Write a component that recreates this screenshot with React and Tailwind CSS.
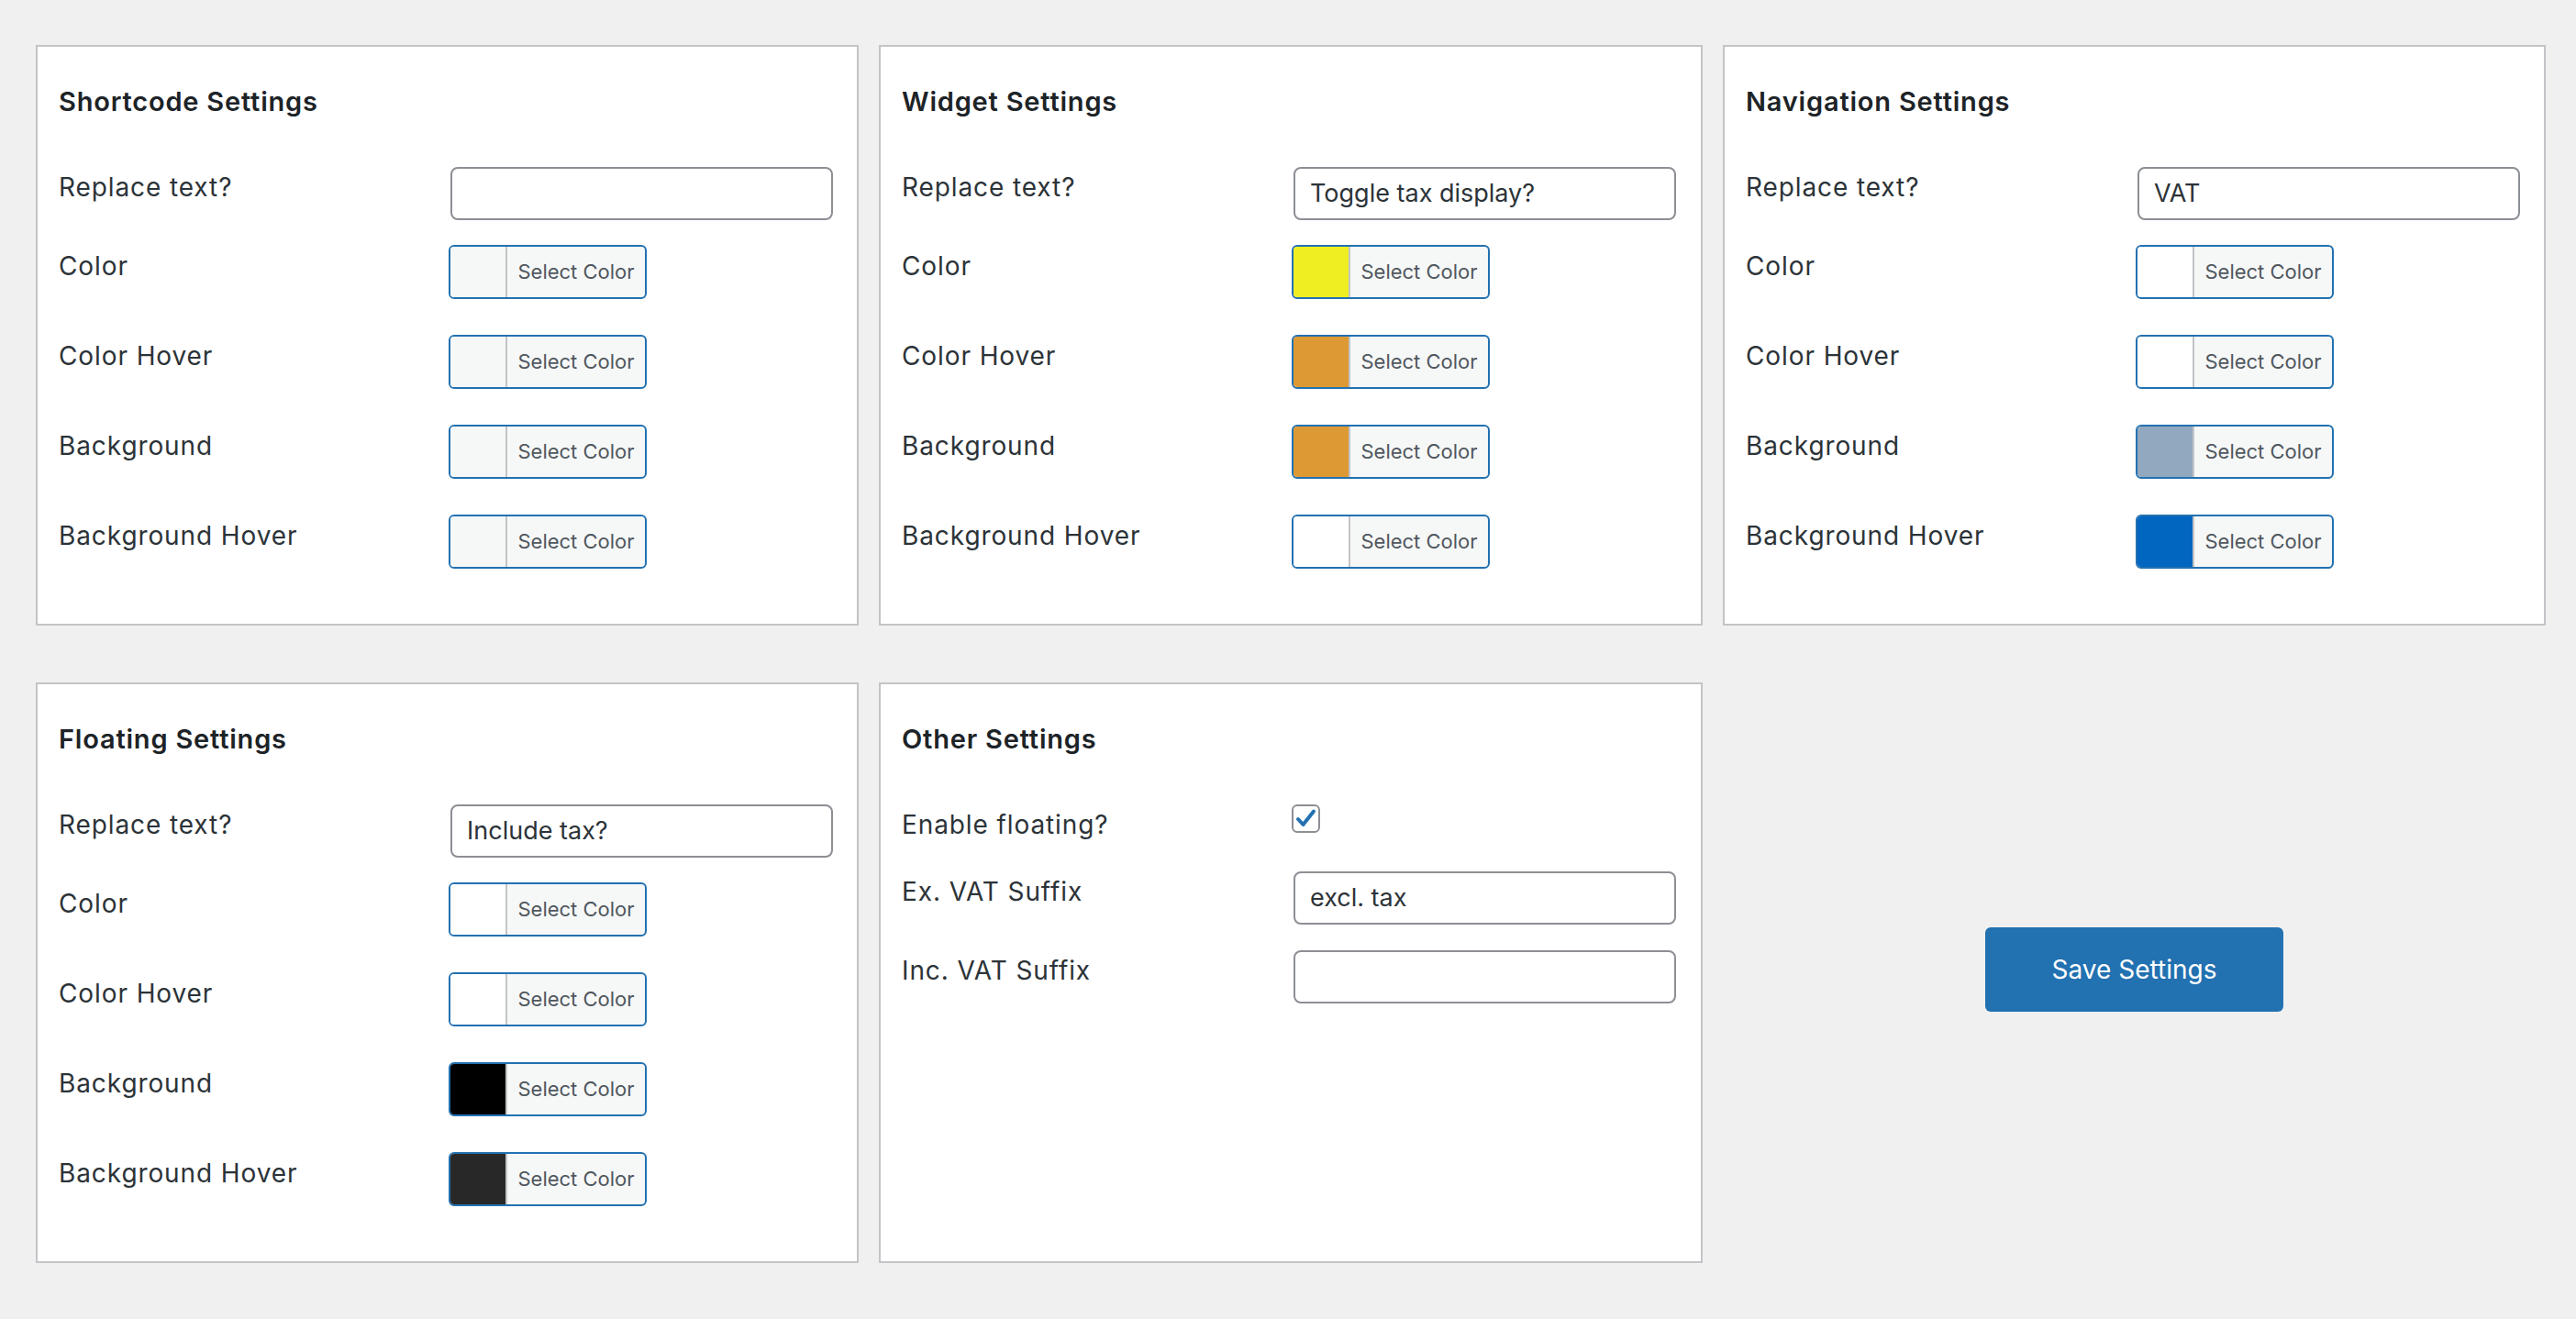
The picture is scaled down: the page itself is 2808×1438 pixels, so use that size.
import React from "react";

const colorPanels = [
  {
    title: "Shortcode Settings",
    text: "",
    colors: [
      { label: "Color", swatch: "bg-[#f6f7f7]" },
      { label: "Color Hover", swatch: "bg-[#f6f7f7]" },
      { label: "Background", swatch: "bg-[#f6f7f7]" },
      { label: "Background Hover", swatch: "bg-[#f6f7f7]" },
    ],
  },
  {
    title: "Widget Settings",
    text: "Toggle tax display?",
    colors: [
      { label: "Color", swatch: "bg-[#eeee22]" },
      { label: "Color Hover", swatch: "bg-[#dd9933]" },
      { label: "Background", swatch: "bg-[#dd9933]" },
      { label: "Background Hover", swatch: "bg-white" },
    ],
  },
  {
    title: "Navigation Settings",
    text: "VAT",
    colors: [
      { label: "Color", swatch: "bg-white" },
      { label: "Color Hover", swatch: "bg-white" },
      { label: "Background", swatch: "bg-[#91a8bf]" },
      { label: "Background Hover", swatch: "bg-[#0066bf]" },
    ],
  },
  {
    title: "Floating Settings",
    text: "Include tax?",
    colors: [
      { label: "Color", swatch: "bg-white" },
      { label: "Color Hover", swatch: "bg-white" },
      { label: "Background", swatch: "bg-black" },
      { label: "Background Hover", swatch: "bg-[#282828]" },
    ],
  },
];

function Panel({ title, children }) {
  return (
    <div className="h-[633px] border-2 border-[#c3c4c7] bg-white pl-[23px] pr-[26px] pt-[40px]">
      <h2 className="text-[29px] leading-[40px] font-semibold tracking-[0.8px] text-[#1d2327]">{title}</h2>
      <div className="mt-[51px] flex flex-col">{children}</div>
    </div>
  );
}

function TextRow({ label, value }) {
  return (
    <div className="flex h-[58px]">
      <div className="w-[427px] pt-[2px] text-[28px] leading-[40px] tracking-[0.9px] text-[#2c3338]">{label}</div>
      <div className="flex h-[58px] w-[417px] items-center rounded-[8px] border-2 border-[#8c8f94] bg-white px-[16px] text-[27px] text-[#2c3338]">
        {value}
      </div>
    </div>
  );
}

function ColorRow({ label, swatch }) {
  return (
    <div className="flex h-[59px]">
      <div className="w-[425px] pt-[3px] text-[28px] leading-[40px] tracking-[0.9px] text-[#2c3338]">{label}</div>
      <div className="flex h-[59px] w-[216px] overflow-hidden rounded-[6px] border-2 border-[#2271b1] bg-[#f6f7f7]">
        <div className={"h-full w-[60px] " + swatch} />
        <div className="h-full w-[2px] bg-[#c3c4c7]" />
        <div className="flex flex-1 items-center justify-center text-[22px] text-[#50575e]">Select Color</div>
      </div>
    </div>
  );
}

function ColorPanel({ p }) {
  return (
    <Panel title={p.title}>
      <TextRow label="Replace text?" value={p.text} />
      <div className="mt-[27px] flex flex-col gap-[39px]">
        {p.colors.map((c) => (
          <ColorRow key={c.label} label={c.label} swatch={c.swatch} />
        ))}
      </div>
    </Panel>
  );
}

function OtherPanel() {
  return (
    <Panel title="Other Settings">
      <div className="flex h-[73px]">
        <div className="w-[425px] pt-[2px] text-[28px] leading-[40px] tracking-[0.9px] text-[#2c3338]">Enable floating?</div>
        <div className="flex h-[31px] w-[31px] items-center justify-center rounded-[6px] border-2 border-[#8c8f94] bg-white">
          <svg width="25" height="25" viewBox="0 0 25 25" fill="none">
            <path d="M4 13 L9.5 19 L21 4.5" stroke="#2271b1" strokeWidth="4" strokeLinecap="round" strokeLinejoin="round" />
          </svg>
        </div>
      </div>
      <TextRow label="Ex. VAT Suffix" value="excl. tax" />
      <div className="mt-[28px]">
        <TextRow label="Inc. VAT Suffix" value="" />
      </div>
    </Panel>
  );
}

export default function App() {
  return (
    <div className="min-h-screen bg-[#f0f0f1] pl-[39px] pr-[33px] pt-[49px] pb-[60px] font-[Inter,sans-serif]">
      <div className="grid grid-cols-[897px_898px_897px] gap-x-[22px] gap-y-[62px]">
        <ColorPanel p={colorPanels[0]} />
        <ColorPanel p={colorPanels[1]} />
        <ColorPanel p={colorPanels[2]} />
        <ColorPanel p={colorPanels[3]} />
        <OtherPanel />
        <div className="flex items-center justify-center pb-[8px]">
          <button className="h-[92px] w-[325px] rounded-[6px] bg-[#2271b1] text-[28px] text-white">Save Settings</button>
        </div>
      </div>
    </div>
  );
}
